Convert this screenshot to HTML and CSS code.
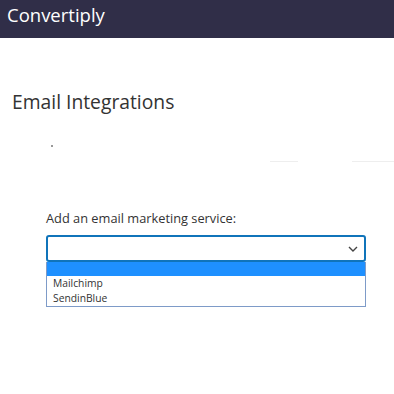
FILE: index.html
```html
<!DOCTYPE html>
<html lang="en">
<head>
  <meta charset="UTF-8" />
  <meta name="viewport" content="width=device-width, initial-scale=1.0"/>
  <title>Convertiply | Email Integrations</title>
  <link rel="stylesheet" href="styles.css">
</head>
<body>
  <header class="topbar">
    <span class="brand">Convertiply</span>
  </header>

  <main class="page">
    <h1 class="title">Email Integrations</h1>

    <div class="faint">
      <span class="dot"></span>
      <span class="line line-a"></span>
      <span class="line line-b"></span>
    </div>

    <section class="field">
      <label class="label">Add an email marketing service:</label>
      <div class="select">
        <span class="value"></span>
        <svg class="chevron" width="10" height="6" viewBox="0 0 10 6">
          <path d="M1 1 L5 5 L9 1" fill="none" stroke="#444" stroke-width="1.4"/>
        </svg>
      </div>
      <ul class="options">
        <li class="option selected">&nbsp;</li>
        <li class="option">Mailchimp</li>
        <li class="option">SendinBlue</li>
      </ul>
    </section>
  </main>
</body>
</html>
```

FILE: styles.css
```css
* {
  margin: 0;
  padding: 0;
  box-sizing: border-box;
}

body {
  background: #fff;
  color: #333;
  font-family: 'Open Sans', 'Noto Sans', sans-serif;
}

.topbar {
  height: 38px;
  background: #302e48;
  padding: 3px 0 0 7px;
}

.brand {
  color: #fff;
  font-size: 18.5px;
  line-height: 24px;
}

.page {
  padding: 50px 0 0 12px;
}

.title {
  font-size: 19.3px;
  font-weight: 400;
  line-height: 28px;
  color: #333;
}

.faint {
  position: relative;
  height: 93px;
}

.dot {
  position: absolute;
  left: 39px;
  top: 29px;
  width: 2px;
  height: 2px;
  background: #999;
}

.line {
  position: absolute;
  top: 45px;
  height: 1px;
  background: #eee;
}

.line-a {
  left: 258px;
  width: 28px;
}

.line-b {
  left: 340px;
  width: 42px;
}

.field {
  width: 320px;
  margin-left: 34px;
}

.label {
  display: block;
  font-size: 12.8px;
  line-height: 18px;
  color: #333;
  margin-bottom: 8px;
}

.select {
  height: 27px;
  border: 2px solid #1074ba;
  border-radius: 3px;
  display: flex;
  align-items: center;
  justify-content: flex-end;
  padding-right: 6px;
}

.options {
  list-style: none;
  border: 1px solid #7e9bc8;
  border-top: none;
}

.option {
  font-size: 10.3px;
  line-height: 15px;
  padding-left: 6px;
  color: #333;
}

.option.selected {
  background: #1e90ff;
  line-height: 14px;
}
```
